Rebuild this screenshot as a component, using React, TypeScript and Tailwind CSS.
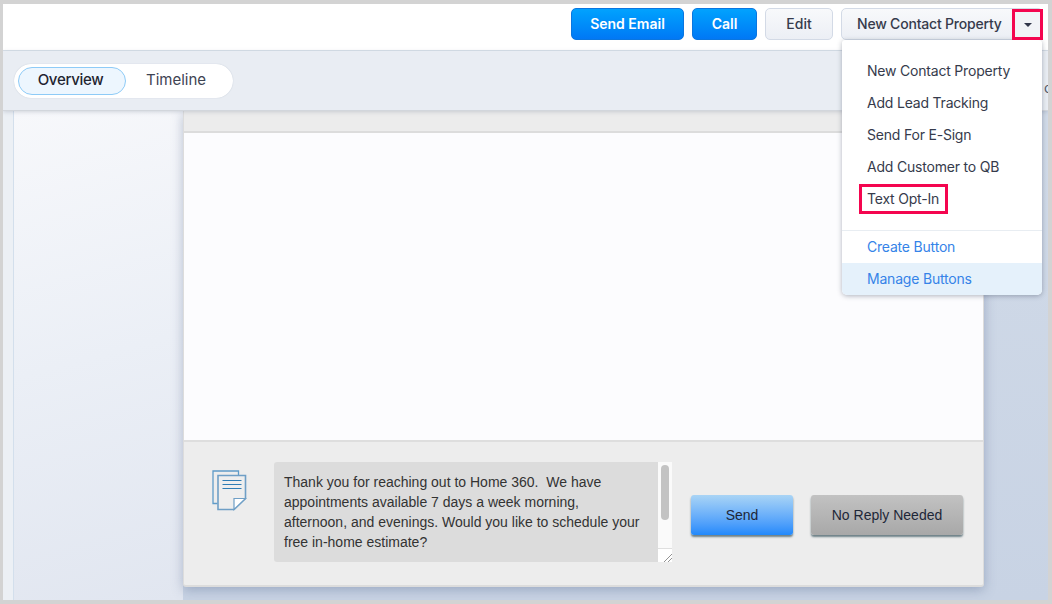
const menuItems = ['New Contact Property', 'Add Lead Tracking', 'Send For E-Sign', 'Add Customer to QB']

function DocsIcon() {
  return (
    <svg width="36" height="42" viewBox="0 0 36 42" fill="none">
      <path d="M5.500 33.500H1V1h25.500v4" stroke="#5f9bc8" strokeWidth="1.300" />
      <path d="M6 5.500h27.500v23L22 39.500H6z" fill="#eeeeee" stroke="#6f9fc6" strokeWidth="1.600" />
      <path d="M22 39.500V28.500h11.500z" fill="#ffffff" stroke="#6f9fc6" strokeWidth="1.200" />
      <path d="M10.500 10.500h19M10.500 14.500h19M10.500 18.500h19" stroke="#2f7db5" strokeWidth="1" />
    </svg>
  )
}

function Dropdown() {
  return (
    <div className="absolute left-[839px] top-[36px] z-20 h-[255px] w-[200px] rounded-b-[5px] rounded-t-[3px] bg-white text-[14px] tracking-[-0.2px] text-[#363b4c] shadow-[0_1px_5px_rgba(60,70,90,0.4)]">
      <div className="flex flex-col pt-[14px]">
        {menuItems.map((item) => (
          <div key={item} className="flex h-[32px] items-center pl-[25px]">
            {item}
          </div>
        ))}
        <div className="relative flex h-[32px] items-center pl-[25px]">
          Text Opt-In
          <span className="absolute left-[17px] top-[2px] h-[30px] w-[89px] border-[3px] border-[#f4054f]" />
        </div>
      </div>
      <div className="mt-[16px] border-t border-[#e8edf2] text-[#3583e8]">
        <div className="flex h-[32px] items-center pb-[2px] pl-[25px]">Create Button</div>
        <div className="flex h-[32px] items-center rounded-b-[5px] bg-[#e5f1fb] pb-[2px] pl-[25px]">Manage Buttons</div>
      </div>
    </div>
  )
}

export default function App() {
  return (
    <div className="h-[604px] w-[1052px] bg-[#d3d3d3] pb-[4px] pl-[3px] pr-[4px] pt-[4px] font-['Inter',sans-serif]">
      <div className="relative flex h-full flex-col overflow-hidden bg-gradient-to-b from-[#d3dce9] to-[#c8d3e4]">
        <header className="relative z-10 flex h-[47px] shrink-0 items-start justify-end border-b border-[#d8e0e9] bg-white pr-[5px] pt-[4px] text-[14px]">
          <button className="h-[32px] w-[113px] rounded-[5px] border border-[#0a76e0] bg-gradient-to-b from-[#03a2fe] to-[#0278f5] pb-[2px] font-semibold text-white">
            Send Email
          </button>
          <button className="ml-[8px] h-[32px] w-[65px] rounded-[5px] border border-[#0a76e0] bg-gradient-to-b from-[#03a2fe] to-[#0278f5] pb-[2px] font-semibold text-white">
            Call
          </button>
          <button className="ml-[8px] h-[32px] w-[68px] rounded-[5px] border border-[#d3dae6] bg-gradient-to-b from-[#f8f9fb] to-[#eceff5] pb-[2px] font-medium text-[#363b4c]">
            Edit
          </button>
          <div className="ml-[8px] flex h-[32px] w-[202px] items-center rounded-[5px] border border-[#d3dae6] bg-gradient-to-b from-[#f8f9fb] to-[#eceff5] pb-[2px] font-medium tracking-[-0.2px] text-[#363b4c]">
            <span className="pl-[15px]">New Contact Property</span>
          </div>
        </header>

        <div className="absolute left-[1009px] top-[5px] z-30 flex h-[31px] w-[31px] items-center justify-center border-[3px] border-[#f4054f] bg-[#f1f3f7]">
          <span className="h-0 w-0 border-x-[4px] border-t-[4px] border-x-transparent border-t-[#30364a]" />
        </div>

        <div className="relative z-10 flex h-[60px] shrink-0 items-center justify-between border-b border-[#d2d6dc] bg-[#e9edf3] pl-[11px] shadow-[0_1px_4px_rgba(120,130,150,0.3)]">
          <div className="flex h-[34px] w-[219px] items-center rounded-full bg-white pl-[4px] text-[15px] shadow-[0_0_1px_rgba(100,120,150,0.4)]">
            <div className="flex h-[28px] w-[108px] items-center justify-center rounded-full border border-[#8ecbf7] bg-[#edf6fe] pr-[3px] font-medium tracking-[-0.3px] text-[#1f2430]">
              Overview
            </div>
            <div className="ml-[20px] text-[#3e4352]">Timeline</div>
          </div>
          <span className="mt-[14px] w-[4px] overflow-hidden text-[14px] text-[#555b6a]">c</span>
        </div>

        <div className="flex min-h-0 flex-1">
          <div className="w-[11px] shrink-0 border-r border-[#d3dfec] bg-[#ecf0f5]" />
          <aside className="w-[169px] shrink-0 bg-[linear-gradient(165deg,#f7f8fb_0%,#ebeff6_50%,#e1e6f0_100%)]" />
          <main className="mb-[13px] flex w-[801px] flex-col rounded-b-[3px] border-x border-b-2 border-[#dcdcdc] bg-[#ededed] shadow-[0_3px_12px_rgba(70,90,130,0.35)]">
            <div className="h-[22px] shrink-0 border-b-2 border-[#dcdcdc] bg-[#ececec]" />
            <div className="flex-1 bg-[#fcfcfe]" />
            <div className="flex h-[145px] shrink-0 border-t-2 border-[#dedede] pl-[28px]">
              <div className="pt-[28px]">
                <DocsIcon />
              </div>
              <div className="ml-[26px] mt-[20px] flex h-[100px] w-[398px] shrink-0">
                <p className="w-[384px] rounded-l-[3px] bg-[#dcdcdc] pl-[10px] pr-[14px] pt-[10px] font-['Liberation_Sans',sans-serif] text-[14px] leading-[20px] text-[#333333]">
                  Thank you for reaching out to Home 360.&nbsp; We have appointments available 7 days a week morning, afternoon, and evenings. Would you like to schedule your free in-home estimate?
                </p>
                <div className="flex w-[14px] flex-col bg-[#fafafa]">
                  <div className="flex-1 px-[3px] pt-[3px]">
                    <div className="h-[55px] rounded-full bg-[#c3c3c3]" />
                  </div>
                  <div className="relative h-[14px] border-t border-[#dfdfdf] bg-white">
                    <svg className="absolute bottom-0 right-0" width="9" height="9" viewBox="0 0 9 9" stroke="#777777" strokeWidth="0.800">
                      <path d="M1 9 9 1M5 9l4-4" />
                    </svg>
                  </div>
                </div>
              </div>
              <div className="ml-[19px] mt-[53px] flex h-[40px] gap-[18px] font-['Liberation_Sans',sans-serif] text-[14px] text-[#1e2738]">
                <button className="w-[102px] rounded-[3px] bg-gradient-to-b from-[#a9d4f5] to-[#2089fb] shadow-[0_2px_2px_rgba(40,70,80,0.65)]">
                  Send
                </button>
                <button className="w-[152px] rounded-[3px] bg-gradient-to-b from-[#c2c2c2] to-[#a8a8a8] shadow-[0_2px_2px_rgba(40,70,80,0.65)]">
                  No Reply Needed
                </button>
              </div>
            </div>
          </main>
        </div>

        <Dropdown />
      </div>
    </div>
  )
}
